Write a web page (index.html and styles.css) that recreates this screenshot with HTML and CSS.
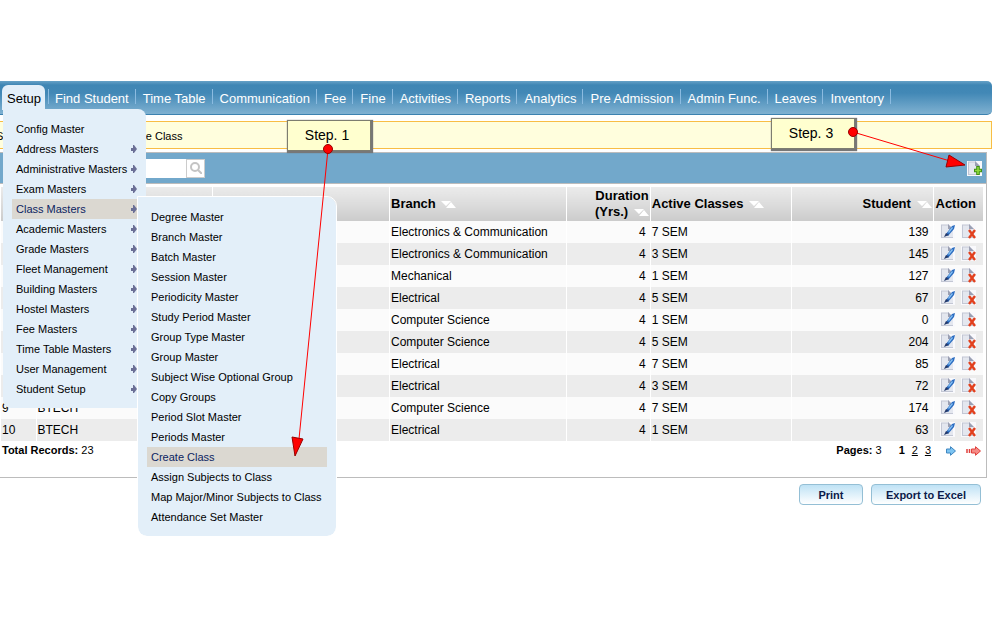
FILE: index.html
```html
<!DOCTYPE html>
<html lang="en">
<head>
<meta charset="utf-8">
<title>Create Class</title>
<link rel="stylesheet" href="styles.css">
</head>
<body>
<svg class="symbols" aria-hidden="true">
  <symbol id="sort" viewBox="0 0 15 7"><path d="M0 0h10L5 5zM5 7l5-6 5 6z" fill="#fff"/></symbol>
  <symbol id="page" viewBox="0 0 15 15">
    <path d="M0 0h15v15H0z" fill="#f9f9fc"/>
    <path d="M1 1h8l4 4v9H1z" fill="#e4e7ef"/>
    <path d="M1 1h8M1.500 1v13M1 13.500h12" stroke="#c3c7d4" fill="none"/>
    <path d="M8 0l5 5H8z" fill="#9ba0b3"/>
  </symbol>
  <symbol id="edit" viewBox="0 0 15 15">
    <use href="#page"/>
    <path d="M6 10l6-8 3-1-1 4-6 7z" fill="#2b6cc0"/>
    <path d="M8 8l4-5 1 1-4 5z" fill="#86c0f2"/>
    <path d="M4 13l2-4 3 2z" fill="#22386a"/>
  </symbol>
  <symbol id="delete" viewBox="0 0 15 15">
    <use href="#page"/>
    <path d="M8 6l6 8M14 6l-6 8" stroke="#e2401d" stroke-width="2.4" fill="none"/>
  </symbol>
  <symbol id="add" viewBox="0 0 15 15">
    <use href="#page"/>
    <path d="M11 5v9M7 9.500h8" stroke="#3f8f12" stroke-width="3.600"/>
    <path d="M11 6v7M8 9.500h6" stroke="#8fdc3c" stroke-width="1.600"/>
  </symbol>
</svg>

<header>
  <nav class="navbar" aria-label="Main">
    <ul class="tabs">
      <li class="tab current"><a href="#">Setup</a>
        <ul class="menu">
          <li><a href="#">Config Master</a></li>
          <li class="more"><a href="#">Address Masters</a></li>
          <li class="more"><a href="#">Administrative Masters</a></li>
          <li class="more"><a href="#">Exam Masters</a></li>
          <li class="more active"><a href="#">Class Masters</a>
            <ul class="submenu">
              <li><a href="#">Degree Master</a></li>
              <li><a href="#">Branch Master</a></li>
              <li><a href="#">Batch Master</a></li>
              <li><a href="#">Session Master</a></li>
              <li><a href="#">Periodicity Master</a></li>
              <li><a href="#">Study Period Master</a></li>
              <li><a href="#">Group Type Master</a></li>
              <li><a href="#">Group Master</a></li>
              <li><a href="#">Subject Wise Optional Group</a></li>
              <li><a href="#">Copy Groups</a></li>
              <li><a href="#">Period Slot Master</a></li>
              <li><a href="#">Periods Master</a></li>
              <li class="active"><a href="#">Create Class</a></li>
              <li><a href="#">Assign Subjects to Class</a></li>
              <li><a href="#">Map Major/Minor Subjects to Class</a></li>
              <li><a href="#">Attendance Set Master</a></li>
            </ul>
          </li>
          <li class="more"><a href="#">Academic Masters</a></li>
          <li class="more"><a href="#">Grade Masters</a></li>
          <li class="more"><a href="#">Fleet Management</a></li>
          <li class="more"><a href="#">Building Masters</a></li>
          <li class="more"><a href="#">Hostel Masters</a></li>
          <li class="more"><a href="#">Fee Masters</a></li>
          <li class="more"><a href="#">Time Table Masters</a></li>
          <li class="more"><a href="#">User Management</a></li>
          <li class="more"><a href="#">Student Setup</a></li>
        </ul>
      </li>
      <li class="tab"><a href="#">Find Student</a></li>
      <li class="tab"><a href="#">Time Table</a></li>
      <li class="tab"><a href="#">Communication</a></li>
      <li class="tab"><a href="#">Fee</a></li>
      <li class="tab"><a href="#">Fine</a></li>
      <li class="tab"><a href="#">Activities</a></li>
      <li class="tab"><a href="#">Reports</a></li>
      <li class="tab"><a href="#">Analytics</a></li>
      <li class="tab"><a href="#">Pre Admission</a></li>
      <li class="tab"><a href="#">Admin Func.</a></li>
      <li class="tab"><a href="#">Leaves</a></li>
      <li class="tab"><a href="#">Inventory</a></li>
    </ul>
  </nav>
</header>

<main>
  <div class="breadcrumb">Setup » Class Masters » Create Class</div>
  <section class="panel">
    <div class="toolbar">
      <form class="search">
        <input type="text" aria-label="Search">
        <button type="button" aria-label="Search">
          <svg width="12" height="12" viewBox="0 0 12 12"><circle cx="5" cy="5" r="4" fill="none" stroke="#c4c4c4" stroke-width="2"/><path d="M8 8l4 4" stroke="#c4c4c4" stroke-width="2"/></svg>
        </button>
      </form>
      <button class="icon" type="button" aria-label="Add class"><svg><use href="#add"/></svg></button>
    </div>
    <table>
      <colgroup><col class="c-no"><col class="c-wide"><col class="c-wide"><col class="c-wide"><col class="c-years"><col><col><col class="c-action"></colgroup>
      <thead>
        <tr><th></th><th></th><th></th><th>Branch <svg class="sort"><use href="#sort"/></svg></th><th class="num">Duration (Yrs.) <svg class="sort"><use href="#sort"/></svg></th><th>Active Classes <svg class="sort"><use href="#sort"/></svg></th><th class="num">Student <svg class="sort"><use href="#sort"/></svg></th><th class="action">Action</th></tr>
      </thead>
      <tbody>
        <tr><td></td><td></td><td></td><td>Electronics &amp; Communication</td><td class="num">4</td><td>7 SEM</td><td class="num">139</td><td class="action"><button class="icon" type="button" aria-label="Edit"><svg><use href="#edit"/></svg></button><button class="icon" type="button" aria-label="Delete"><svg><use href="#delete"/></svg></button></td></tr>
        <tr><td></td><td></td><td></td><td>Electronics &amp; Communication</td><td class="num">4</td><td>3 SEM</td><td class="num">145</td><td class="action"><button class="icon" type="button" aria-label="Edit"><svg><use href="#edit"/></svg></button><button class="icon" type="button" aria-label="Delete"><svg><use href="#delete"/></svg></button></td></tr>
        <tr><td></td><td></td><td></td><td>Mechanical</td><td class="num">4</td><td>1 SEM</td><td class="num">127</td><td class="action"><button class="icon" type="button" aria-label="Edit"><svg><use href="#edit"/></svg></button><button class="icon" type="button" aria-label="Delete"><svg><use href="#delete"/></svg></button></td></tr>
        <tr><td></td><td></td><td></td><td>Electrical</td><td class="num">4</td><td>5 SEM</td><td class="num">67</td><td class="action"><button class="icon" type="button" aria-label="Edit"><svg><use href="#edit"/></svg></button><button class="icon" type="button" aria-label="Delete"><svg><use href="#delete"/></svg></button></td></tr>
        <tr><td></td><td></td><td></td><td>Computer Science</td><td class="num">4</td><td>1 SEM</td><td class="num">0</td><td class="action"><button class="icon" type="button" aria-label="Edit"><svg><use href="#edit"/></svg></button><button class="icon" type="button" aria-label="Delete"><svg><use href="#delete"/></svg></button></td></tr>
        <tr><td></td><td></td><td></td><td>Computer Science</td><td class="num">4</td><td>5 SEM</td><td class="num">204</td><td class="action"><button class="icon" type="button" aria-label="Edit"><svg><use href="#edit"/></svg></button><button class="icon" type="button" aria-label="Delete"><svg><use href="#delete"/></svg></button></td></tr>
        <tr><td></td><td></td><td></td><td>Electrical</td><td class="num">4</td><td>7 SEM</td><td class="num">85</td><td class="action"><button class="icon" type="button" aria-label="Edit"><svg><use href="#edit"/></svg></button><button class="icon" type="button" aria-label="Delete"><svg><use href="#delete"/></svg></button></td></tr>
        <tr><td></td><td></td><td></td><td>Electrical</td><td class="num">4</td><td>3 SEM</td><td class="num">72</td><td class="action"><button class="icon" type="button" aria-label="Edit"><svg><use href="#edit"/></svg></button><button class="icon" type="button" aria-label="Delete"><svg><use href="#delete"/></svg></button></td></tr>
        <tr><td>9</td><td>BTECH</td><td></td><td>Computer Science</td><td class="num">4</td><td>7 SEM</td><td class="num">174</td><td class="action"><button class="icon" type="button" aria-label="Edit"><svg><use href="#edit"/></svg></button><button class="icon" type="button" aria-label="Delete"><svg><use href="#delete"/></svg></button></td></tr>
        <tr><td>10</td><td>BTECH</td><td></td><td>Electrical</td><td class="num">4</td><td>1 SEM</td><td class="num">63</td><td class="action"><button class="icon" type="button" aria-label="Edit"><svg><use href="#edit"/></svg></button><button class="icon" type="button" aria-label="Delete"><svg><use href="#delete"/></svg></button></td></tr>
      </tbody>
    </table>
    <div class="summary">
      <span><b>Total Records:</b> 23</span>
      <div class="pager">
        <span class="count"><b>Pages:</b> 3</span>
        <b>1</b><a href="#">2</a><a href="#">3</a>
        <a class="next" href="#" aria-label="Next page"><svg width="10" height="10" viewBox="0 0 10 10"><path d="M.5 3h4V.7L9.500 5 4.500 9.300V7h-4z" fill="#7cc4f2" stroke="#3f86c0"/></svg></a>
        <a href="#" aria-label="Last page"><svg width="15" height="10" viewBox="0 0 15 10"><path d="M1 3v4M3.500 3v4" stroke="#e0403c" stroke-width="1.500"/><path d="M5.500 3h4V.7L14.500 5 9.500 9.300V7h-4z" fill="#f58b86" stroke="#e0403c"/></svg></a>
      </div>
    </div>
  </section>
  <div class="buttons">
    <button type="button">Print</button>
    <button type="button">Export to Excel</button>
  </div>
</main>

<div class="note note-one">Step. 1
  <svg width="50" height="320" viewBox="0 0 50 320"><path d="M41 8L12 298" stroke="#f00" fill="none"/><path d="M5 296l11 2-8 17z" fill="#f00" stroke="#900"/><circle cx="41" cy="8" r="4.500" fill="#f00" stroke="#900"/></svg>
</div>
<div class="note note-three">Step. 3
  <svg width="124" height="44" viewBox="0 0 124 44"><path d="M5 6l97 29" stroke="#f00" fill="none"/><path d="M101 29l-3 12 19-2z" fill="#f00" stroke="#900"/><circle cx="5" cy="6" r="4.500" fill="#f00" stroke="#900"/></svg>
</div>
</body>
</html>
```
FILE: styles.css
```css
* { box-sizing: border-box; }

body {
  margin: 0;
  position: relative;
  min-height: 100vh;
  background: #fff;
  color: #000;
  font: 12px/16px "Liberation Sans", Arial, sans-serif;
}

a { color: inherit; text-decoration: none; }
ul { list-style: none; margin: 0; padding: 0; }
button { font: inherit; cursor: pointer; }
.symbols { position: absolute; width: 0; height: 0; }

header { padding: 81px 7px 0 0; }

.navbar {
  height: 34px;
  padding-left: 2px;
  border-bottom: 1px solid #3c82b0;
  border-radius: 0 5px 5px 0;
  background: linear-gradient(#66a1c6, #3f86b4 4px, #4288b6 12px, #7fb1d1);
  color: #fff;
  font-size: 13px;
}

.tabs { display: flex; }
.tab { position: relative; padding-top: 8px; white-space: nowrap; }
.tab > a {
  display: block;
  height: 15px;
  padding: 0 6px 0 7px;
  border-right: 1px solid #8bbbe0;
  line-height: 19px;
}
.tab.current { width: 46px; padding-top: 4px; color: #000; }
.tab.current > a {
  width: 43px;
  height: 25px;
  padding: 0 0 0 5px;
  border: 0;
  border-radius: 6px 6px 0 0;
  background: #e3eff9;
  line-height: 27px;
}
.tab.current + .tab > a { border-left: 1px solid #8bbbe0; padding-left: 6px; }

.menu, .submenu {
  position: absolute;
  z-index: 2;
  background: #e3eff9;
  font-size: 11px;
  line-height: 20px;
}
.menu {
  top: 28px;
  left: 1px;
  width: 143px;
  padding: 10px 0 9px 9px;
  border-radius: 0 8px 8px 8px;
}
.menu li { position: relative; padding-left: 4px; }
.more::after {
  content: "";
  position: absolute;
  top: 6px;
  right: 9px;
  width: 6px;
  height: 8px;
  background: #6b6f96;
  clip-path: polygon(0 3px, 2px 3px, 2px 0, 3px 0, 6px 4px, 3px 8px, 2px 8px, 2px 6px, 0 6px);
}
.menu .active { background: #dbd8d1; color: #0c2461; }
.submenu {
  top: -2px;
  left: 126px;
  width: 198px;
  padding: 10px 9px 9px;
  border-radius: 0 9px 9px 9px;
  outline: 1px solid #fff;
  color: #000;
}

main { padding: 6px 7px 0 0; }

.breadcrumb {
  height: 28px;
  border: 1px solid #f8bd45;
  border-left: 0;
  background: #fffedd;
  font-size: 11px;
  line-height: 28px;
  text-indent: -4px;
}

.panel {
  margin: 3px 5px 0 0;
  border: 1px solid #bcbcbc;
  border-left: 0;
}

.toolbar {
  display: flex;
  justify-content: space-between;
  align-items: center;
  height: 31px;
  padding: 0 4px 0 20px;
  border-bottom: 1px solid #bcbcbc;
  background: #72a8cb;
}
.search { display: flex; }
.search input {
  width: 166px;
  height: 19px;
  padding: 0 4px;
  border: 0;
  background: #fff;
  font: inherit;
}
.search button {
  display: grid;
  place-items: center;
  width: 19px;
  height: 19px;
  padding: 0;
  border: 1px solid #ccc;
  background: #fff;
}

.icon { padding: 0; border: 0; background: none; }
.icon svg { display: block; width: 15px; height: 15px; }

table {
  width: calc(100% - 4px);
  margin: 3px 3px 0 1px;
  border-collapse: collapse;
  table-layout: fixed;
}
.c-no { width: 35px; }
.c-wide { width: 18%; }
.c-years { width: 84px; }
.c-action { width: 50px; }

th, td { padding: 0 1px; text-align: left; }
th + th, td + td { border-left: 1px solid #fff; }
th {
  height: 34px;
  background: linear-gradient(#ebebeb, #d9d9d9 60%, #cbcbcb);
  font-size: 13px;
}
td { height: 22px; background: #fbfbfb; }
tr:nth-child(even) td { background: #ececec; }
th.num { text-align: right; }
td.num { padding-right: 4px; text-align: right; }
.sort { width: 15px; height: 7px; margin-left: 2px; }
th.action { padding: 0 2px; }
td.action { padding: 0 0 2px 6px; }
td .icon { float: left; margin-right: 6px; }
td .icon + .icon { margin-right: 0; }

.summary {
  display: flex;
  justify-content: space-between;
  height: 36px;
  padding: 1px 5px 0 2px;
  font-size: 11px;
}
.pager { display: flex; gap: 7px; }
.pager a { text-decoration: underline; }
.pager svg { display: block; margin-top: 4px; }
.count { margin-right: 10px; }
.next { margin: 0 3px 0 8px; }

.buttons {
  display: flex;
  justify-content: flex-end;
  gap: 8px;
  padding: 6px 11px 0 0;
}
.buttons button {
  height: 21px;
  min-width: 64px;
  padding: 0 14px;
  border: 1px solid #94bfd5;
  border-radius: 4px;
  background: linear-gradient(#bfe2f5, #fff);
  color: #0c1b4a;
  font-size: 11px;
  font-weight: bold;
}

.note {
  position: absolute;
  z-index: 5;
  width: 84px;
  height: 31px;
  padding-right: 4px;
  border: 1px solid #7d7d70;
  background: #ffffcf;
  box-shadow: 1px 1px 1px 1px #777;
  font-size: 14px;
  line-height: 28px;
  text-align: center;
}
.note svg { position: absolute; }
.note-one { top: 120px; left: 287px; }
.note-one svg { top: 20px; left: -1px; }
.note-three { top: 118px; left: 771px; }
.note-three svg { top: 7px; left: 76px; }
```
